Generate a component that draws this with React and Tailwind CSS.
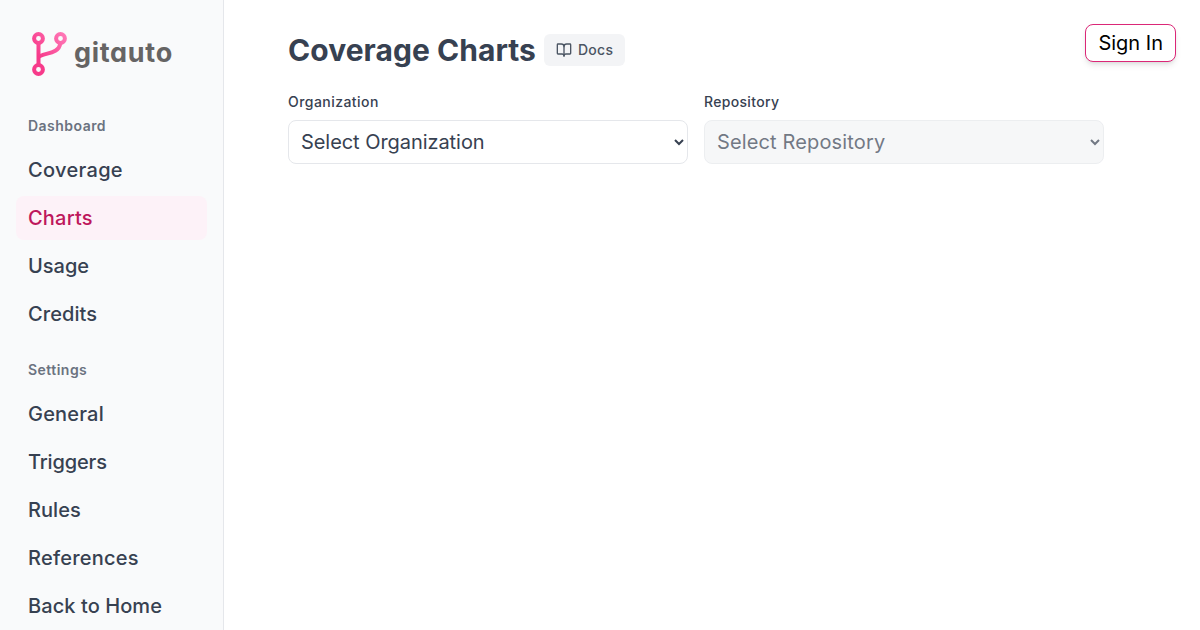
import { BookOpen } from "lucide-react";

const sections = [
  {
    title: "Dashboard",
    items: [
      { name: "Coverage", tracking: "tracking-[0.32px]" },
      { name: "Charts", tracking: "tracking-[0.2px]", active: true },
      { name: "Usage", tracking: "tracking-normal" },
      { name: "Credits", tracking: "tracking-[0.07px]" },
    ],
  },
  {
    title: "Settings",
    items: [
      { name: "General", tracking: "tracking-[0.2px]" },
      { name: "Triggers", tracking: "tracking-[-0.15px]" },
      { name: "Rules", tracking: "tracking-[0.05px]" },
      { name: "References", tracking: "tracking-[0.23px]" },
      { name: "Back to Home", tracking: "tracking-[0.08px]" },
    ],
  },
];

function Logo() {
  return (
    <a href="#" className="flex h-11 items-start pl-4">
      <svg width="36" height="44" viewBox="0 0 36 44" fill="none" className="shrink-0">
        <defs>
          <linearGradient id="branch" x1="0" y1="30" x2="34" y2="4" gradientUnits="userSpaceOnUse">
            <stop offset="0.2" stopColor="#f73a8a" />
            <stop offset="1" stopColor="#ff77b6" />
          </linearGradient>
        </defs>
        <g stroke="url(#branch)" strokeWidth="4">
          <path d="M6.5 11V33M6.5 26C8 20 27 24 28.3 11" />
          <circle cx="6.5" cy="6.5" r="4.4" />
          <circle cx="28.5" cy="6.5" r="4.4" />
          <circle cx="6.5" cy="37.5" r="4.4" />
        </g>
      </svg>
      <span className="ml-[6px] text-[27px] leading-[41px] font-bold tracking-[0.7px] text-[#666464] [font-feature-settings:'cv11']">
        gitauto
      </span>
    </a>
  );
}

function Sidebar() {
  return (
    <aside className="h-full w-56 shrink-0 overflow-hidden border-r border-gray-200 bg-[#f9fafb] px-4 pt-8">
      <div className="mb-9">
        <Logo />
      </div>
      {sections.map((section) => (
        <nav key={section.title} className="mb-5">
          <h3 className="mb-3 px-3 pt-1 text-sm font-semibold tracking-[0.47px] text-[#6b7280]">{section.title}</h3>
          <div className="space-y-1">
            {section.items.map((item) => (
              <a
                key={item.name}
                href="#"
                className={`block w-[191px] rounded-lg px-3 py-2 text-xl font-medium ${item.tracking} ${
                  item.active ? "bg-[#fdf2f8] text-[#be185d]" : "text-[#374151]"
                }`}
              >
                {item.name}
              </a>
            ))}
          </div>
        </nav>
      ))}
    </aside>
  );
}

function Field({ label, disabled, labelTracking, selectTracking }) {
  return (
    <label className="block w-[400px] text-sm font-medium">
      <span className={`mb-2 block ${labelTracking}`}>{label}</span>
      <select
        disabled={disabled}
        className={`block h-11 w-full rounded-lg border border-[#e5e7eb] bg-white px-2 text-xl font-normal disabled:bg-[#f3f4f6] disabled:opacity-70 ${selectTracking}`}
      >
        <option>Select {label}</option>
      </select>
    </label>
  );
}

export default function App() {
  return (
    <div className="flex h-[630px] overflow-hidden bg-white font-['Inter',sans-serif] text-[#374151]">
      <Sidebar />
      <main className="flex flex-1 items-start justify-between pr-6 pl-16">
        <div className="pt-8">
          <div className="mb-6 flex items-center gap-2">
            <h1 className="text-3xl font-bold tracking-[0.05px]">Coverage Charts</h1>
            <a
              href="#"
              className="flex h-8 items-center gap-1.5 rounded-md bg-[#f3f4f6] px-3 text-sm font-medium tracking-[0.3px] text-[#4b5563]"
            >
              <BookOpen size={16} strokeWidth={2} />
              Docs
            </a>
          </div>
          <div className="flex gap-4">
            <Field label="Organization" labelTracking="tracking-[0.45px]" selectTracking="tracking-[-0.06px]" />
            <Field label="Repository" labelTracking="tracking-[0.32px]" selectTracking="tracking-[0.14px]" disabled />
          </div>
        </div>
        <div className="-ml-24 pt-6">
          <button className="h-[38px] rounded-lg border border-[#db2777] bg-white px-3 text-xl whitespace-nowrap text-black shadow-md">
            Sign In
          </button>
        </div>
      </main>
    </div>
  );
}
